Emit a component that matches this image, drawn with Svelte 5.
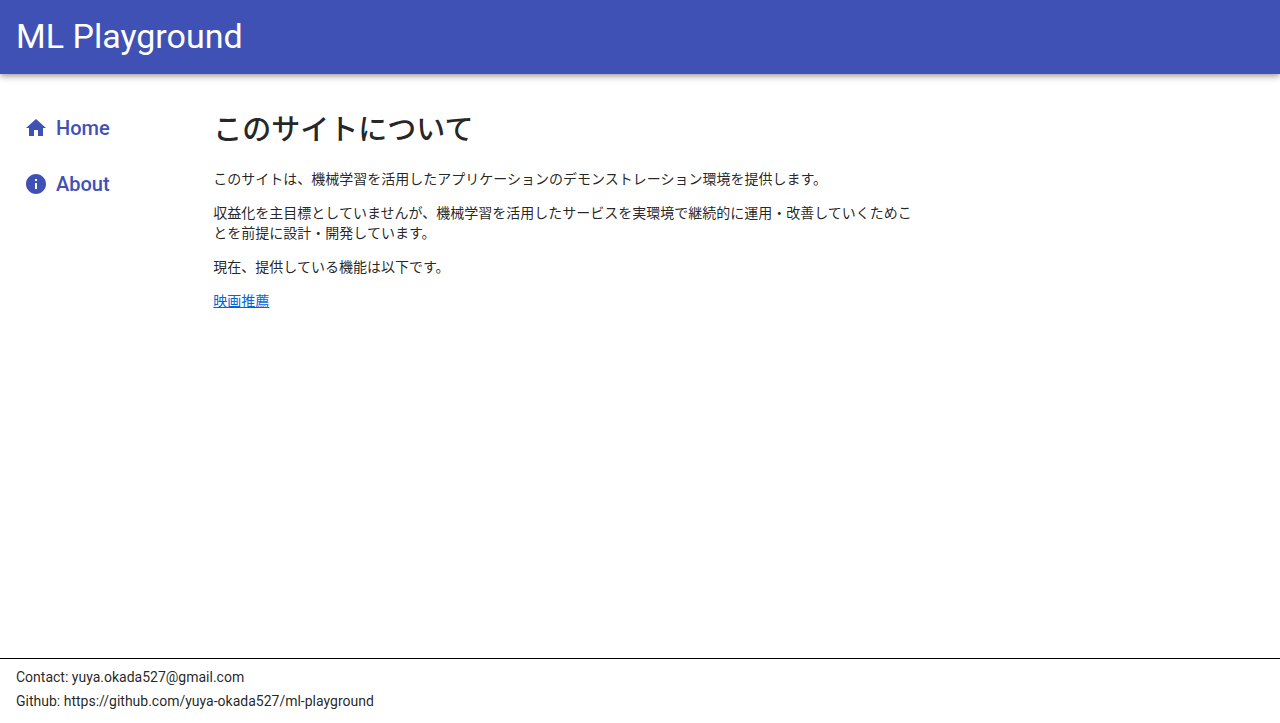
<script>
  const nav = [
    { label: 'Home', path: 'M10 20v-6h4v6h5v-8h3L12 3 2 12h3v8z' },
    { label: 'About', path: 'M12 2C6.48 2 2 6.48 2 12s4.48 10 10 10 10-4.48 10-10S17.52 2 12 2zm1 15h-2v-6h2v6zm0-8h-2V7h2v2z' }
  ];
</script>

<div class="page">
  <header><span class="brand">ML Playground</span></header>
  <div class="body">
    <nav>
      {#each nav as item}
        <a href="#{item.label.toLowerCase()}">
          <svg viewBox="0 0 24 24" aria-hidden="true"><path d={item.path} /></svg>
          <span>{item.label}</span>
        </a>
      {/each}
    </nav>
    <main>
      <h1>このサイトについて</h1>
      <p>このサイトは、機械学習を活用したアプリケーションのデモンストレーション環境を提供します。</p>
      <p>収益化を主目標としていませんが、機械学習を活用したサービスを実環境で継続的に運用・改善していくためことを前提に設計・開発しています。</p>
      <p>現在、提供している機能は以下です。</p>
      <p><a href="#movies">映画推薦</a></p>
    </main>
  </div>
  <footer>
    <div>Contact: yuya.okada527@gmail.com</div>
    <div>Github: https://github.com/yuya-okada527/ml-playground</div>
  </footer>
</div>

<style>
  :global(body) {
    margin: 0;
    background: #fff;
  }
  .page {
    min-height: 100vh;
    display: flex;
    flex-direction: column;
    font-family: Roboto, 'Noto Sans CJK JP', sans-serif;
    font-size: 14px;
    line-height: 20px;
    color: rgba(0, 0, 0, 0.87);
  }
  header {
    padding: 16px 16px 18px;
    background: #3f51b5;
    color: #fff;
    box-shadow: 0 2px 4px -1px rgba(0, 0, 0, 0.2), 0 4px 5px 0 rgba(0, 0, 0, 0.14), 0 1px 10px 0 rgba(0, 0, 0, 0.12);
  }
  .brand {
    display: block;
    font-size: 34px;
    line-height: 40px;
  }
  .body {
    flex: 1;
    display: grid;
    grid-template-columns: 2fr 7fr 3fr;
  }
  nav {
    display: flex;
    flex-direction: column;
    align-items: flex-start;
    gap: 24px;
    padding: 38px 24px;
  }
  nav a {
    display: flex;
    align-items: center;
    gap: 8px;
    font-size: 20px;
    font-weight: 500;
    line-height: 32px;
    color: #3f51b5;
    text-decoration: none;
  }
  svg {
    width: 24px;
    height: 24px;
    fill: currentColor;
  }
  main {
    padding: 36px 40px 0 0;
  }
  h1 {
    margin: 0 0 19px;
    font-size: 29px;
    font-weight: 500;
    line-height: 40px;
  }
  p {
    margin: 0 0 14px;
  }
  main a {
    color: #0366d6;
  }
  footer {
    padding: 6px 16px 10px;
    border-top: 1px solid #000;
    line-height: 24px;
  }
</style>
